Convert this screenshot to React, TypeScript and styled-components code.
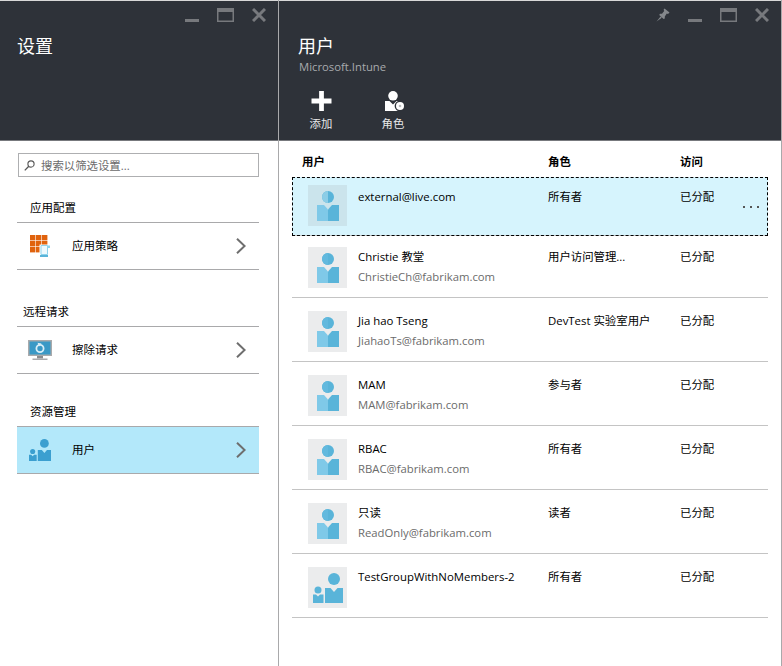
import React from "react"
import styled, { createGlobalStyle } from "styled-components"

const GlobalStyle = createGlobalStyle`
  html, body {
    margin: 0;
    padding: 0;
    background: #fff;
  }
  body {
    font-family: "Open Sans", "Noto Sans CJK SC", sans-serif;
    color: #000;
  }
`

type User = {
  name: string
  email?: string
  role: string
  group?: boolean
  selected?: boolean
}

const users: User[] = [
  { name: "external@live.com", role: "所有者", selected: true },
  { name: "Christie 教堂", email: "ChristieCh@fabrikam.com", role: "用户访问管理..." },
  { name: "Jia hao Tseng", email: "JiahaoTs@fabrikam.com", role: "DevTest 实验室用户" },
  { name: "MAM", email: "MAM@fabrikam.com", role: "参与者" },
  { name: "RBAC", email: "RBAC@fabrikam.com", role: "所有者" },
  { name: "只读", email: "ReadOnly@fabrikam.com", role: "读者" },
  { name: "TestGroupWithNoMembers-2", role: "所有者", group: true },
]

const WindowIcons = ({ pin }: { pin?: boolean }) => (
  <WindowControls>
    {pin && (
      <svg width="14" height="14" viewBox="0 0 14 14">
        <path d="M8.5 0.5 L13.5 4.5 L12 6 L10.8 5.6 L8.8 8.4 L8.8 10.4 L7.6 11 L3.2 7 L4 5.8 L6 5.8 L8.2 3 L7.6 1.8 Z" fill="#85888c" />
        <path d="M4.6 8.6 L0.5 13.5 L5.8 9.8 Z" fill="#85888c" />
      </svg>
    )}
    <svg width="14" height="14" viewBox="0 0 14 14">
      <rect x="0" y="11" width="14" height="3" fill="#77797d" />
    </svg>
    <svg width="17" height="14" viewBox="0 0 17 14">
      <path d="M0 0H17V14H0Z M1.5 4V12.5H15.5V4Z" fillRule="evenodd" fill="#77797d" />
    </svg>
    <svg width="14" height="14" viewBox="0 0 14 14">
      <path d="M1 1 L13 13 M13 1 L1 13" stroke="#77797d" strokeWidth="3" />
    </svg>
  </WindowControls>
)

const PersonIcon = ({ muted }: { muted?: boolean }) => (
  <svg width="22" height="30" viewBox="0 0 22 30">
    <circle cx="11" cy="6" r="6" fill="#59b4d9" />
    <path d="M11 0 A6 6 0 0 0 11 12 Z" fill={muted ? "#8ccde6" : "#62b9de"} />
    <path d="M0 14 L7 14 L11 18.5 L11 30 L0 30 Z" fill="#7fc9e8" />
    <path d="M22 14 L15 14 L11 18.5 L11 30 L22 30 Z" fill="#59b4d9" />
  </svg>
)

const GroupIcon = ({ size = 30, color = "#59b4d9" }: { size?: number; color?: string }) => (
  <svg width={size} height={size} viewBox="0 0 30 30">
    <circle cx="21" cy="6" r="6" fill={color} />
    <path d="M12 15 L17.5 15 L21 19 L24.5 15 L30 15 L30 30 L12 30 Z" fill={color} />
    <circle cx="5" cy="17" r="3.5" fill={color} />
    <path d="M0 21.5 L3 21.5 L5 23.5 L7 21.5 L10.5 21.5 L10.5 30 L0 30 Z" fill={color} />
  </svg>
)

const PolicyIcon = () => (
  <svg width="20" height="22" viewBox="0 0 20 22">
    {[0, 1, 2].map((row) =>
      [0, 1, 2].map((col) => (
        <rect key={`${row}-${col}`} x={col * 6} y={row * 6} width="5.4" height="5.4" fill="#e0620d" />
      ))
    )}
    <path d="M9.5 9.5 H20 V22 H9.5 Z" fill="#fff" />
    <path d="M11 10.5 H17.5 V19.5 H11 Z" fill="#eef9fd" stroke="#8fd3ec" strokeWidth="1" />
    <path d="M17.5 10.5 H20 V13 H17.5 Z" fill="#8fd3ec" />
    <path d="M10 20 H18 V22 H10 Z" fill="#59b4d9" />
  </svg>
)

const WipeIcon = () => (
  <svg width="24" height="20" viewBox="0 0 24 20">
    <rect x="0" y="0" width="24" height="16" fill="#a9aaac" />
    <rect x="1.5" y="1.5" width="21" height="13" fill="#3999c6" />
    <rect x="9" y="16" width="6" height="2.5" fill="#8a8c8e" />
    <rect x="4.5" y="18.5" width="15" height="1.5" fill="#a9aaac" />
    <circle cx="12" cy="8.5" r="3.6" fill="none" stroke="#d8eef7" strokeWidth="1.8" />
    <path d="M9.5 2.8 L13.5 3.6 L11 6.6 Z" fill="#d8eef7" />
  </svg>
)

const RoleIcon = () => (
  <svg width="24" height="20" viewBox="-4 0 24 20">
    <circle cx="8" cy="4.8" r="4.8" fill="#fff" />
    <path d="M0 10 L4.5 10 L8 13.5 L11.5 10 L14 10 L14 20 L0 20 Z" fill="#fff" />
    <circle cx="15" cy="15" r="5.4" fill="#2e3239" />
    <circle cx="15" cy="15" r="4" fill="#fff" />
    <circle cx="15" cy="15" r="1.3" fill="#b9babc" />
  </svg>
)

const Chevron = () => (
  <ChevronWrap>
    <svg width="10" height="16" viewBox="0 0 10 16">
      <path d="M1 0.8 L8.6 8 L1 15.2" fill="none" stroke="#6e6e6e" strokeWidth="2" />
    </svg>
  </ChevronWrap>
)

const App: React.FC = () => {
  return (
    <Page>
      <GlobalStyle />
      <SettingsBlade>
        <BladeHeader>
          <WindowIcons />
          <BladeTitle $left={17}>设置</BladeTitle>
        </BladeHeader>
        <SearchBox>
          <svg width="11" height="11" viewBox="0 0 11 11">
            <circle cx="7" cy="4" r="3.1" fill="none" stroke="#555" strokeWidth="1.1" />
            <path d="M4.8 6.2 L0.8 10.4" stroke="#555" strokeWidth="1.3" />
          </svg>
          <span>搜索以筛选设置...</span>
        </SearchBox>
        <SectionLabel $top={23} $left={30}>应用配置</SectionLabel>
        <MenuRow>
          <MenuIcon><PolicyIcon /></MenuIcon>
          <MenuText>应用策略</MenuText>
          <Chevron />
        </MenuRow>
        <SectionLabel $top={34} $left={23}>远程请求</SectionLabel>
        <MenuRow>
          <MenuIcon><WipeIcon /></MenuIcon>
          <MenuText>擦除请求</MenuText>
          <Chevron />
        </MenuRow>
        <SectionLabel $top={30} $left={30}>资源管理</SectionLabel>
        <MenuRow $active>
          <MenuIcon><GroupIcon size={22} color="#3b9fd0" /></MenuIcon>
          <MenuText>用户</MenuText>
          <Chevron />
        </MenuRow>
      </SettingsBlade>

      <UsersBlade>
        <BladeHeader>
          <WindowIcons pin />
          <BladeTitle $left={19}>用户</BladeTitle>
          <Subtitle>Microsoft.Intune</Subtitle>
          <Commands>
            <Command>
              <svg width="21" height="20" viewBox="0 0 21 21">
                <path d="M8 0H13V8H21V13H13V21H8V13H0V8H8Z" fill="#fff" />
              </svg>
              <span>添加</span>
            </Command>
            <Command>
              <RoleIcon />
              <span>角色</span>
            </Command>
          </Commands>
        </BladeHeader>
        <TableHead>
          <span>用户</span>
          <span>角色</span>
          <span>访问</span>
        </TableHead>
        <Rows>
          {users.map((user) => (
            <UserRow key={user.name} $selected={user.selected}>
              <Avatar $selected={user.selected}>
                {user.group ? <GroupIcon /> : <PersonIcon muted={user.selected} />}
              </Avatar>
              <NameCell>
                <Name>{user.name}</Name>
                {user.email && <Email>{user.email}</Email>}
              </NameCell>
              <Cell>{user.role}</Cell>
              <Cell>已分配</Cell>
              {user.selected && (
                <MoreDots>
                  <i />
                  <i />
                  <i />
                </MoreDots>
              )}
            </UserRow>
          ))}
        </Rows>
      </UsersBlade>
    </Page>
  )
}

const Page = styled.div`
  display: flex;
  width: 782px;
  height: 666px;
  overflow: hidden;
`

const SettingsBlade = styled.section`
  width: 278px;
  flex-shrink: 0;
  border-right: 1px solid #a9a9ab;
  box-sizing: content-box;
`

const UsersBlade = styled.section`
  flex: 1;
  min-width: 0;
  border-right: 1px solid #a9a9ab;
`

const BladeHeader = styled.header`
  position: relative;
  height: 141px;
  box-sizing: border-box;
  background: #2e3239;
  border-top: 1px solid #d8d8d8;
  border-bottom: 1px solid #77797d;
`

const WindowControls = styled.div`
  position: absolute;
  top: 7px;
  right: 12px;
  display: flex;
  align-items: center;
  gap: 18px;
`

const BladeTitle = styled.h1<{ $left: number }>`
  margin: 32px 0 0 ${({ $left }) => $left}px;
  font-size: 18px;
  line-height: 26px;
  font-weight: 400;
  color: #fff;
`

const Subtitle = styled.div`
  margin: 0 0 0 20px;
  font-size: 11.3px;
  line-height: 15px;
  color: #a8aaad;
`

const Commands = styled.div`
  display: flex;
  margin: 17px 0 0 19px;
  gap: 26px;
`

const Command = styled.div`
  width: 46px;
  display: flex;
  flex-direction: column;
  align-items: center;
  gap: 6px;
  font-size: 11.4px;
  line-height: 14px;
  color: #e8e8e9;
`

const SearchBox = styled.div`
  display: flex;
  align-items: center;
  gap: 6px;
  box-sizing: border-box;
  width: 241px;
  height: 24px;
  margin: 12px 0 0 18px;
  padding: 0 5px;
  border: 1px solid #aeafb1;
  font-size: 11.4px;
  color: #6b6b6b;
`

const SectionLabel = styled.div<{ $top: number; $left: number }>`
  margin: ${({ $top }) => $top}px 0 0 ${({ $left }) => $left}px;
  height: 22px;
  font-size: 11.5px;
  line-height: 16px;
`

const MenuRow = styled.div<{ $active?: boolean }>`
  display: flex;
  align-items: center;
  box-sizing: border-box;
  width: 242px;
  height: 48px;
  margin-left: 17px;
  border-top: 1px solid #a9a9ab;
  border-bottom: 1px solid #a9a9ab;
  background: ${({ $active }) => ($active ? "#b3e8fa" : "transparent")};
`

const MenuIcon = styled.div`
  width: 55px;
  display: flex;
  justify-content: center;
  padding-right: 9px;
  box-sizing: border-box;
`

const MenuText = styled.div`
  flex: 1;
  font-size: 11.5px;
  padding-bottom: 3px;
`

const ChevronWrap = styled.div`
  display: flex;
  margin-right: 13px;
`

const TableHead = styled.div`
  display: grid;
  grid-template-columns: 246px 132px 1fr;
  height: 36px;
  padding: 13px 0 0 23px;
  box-sizing: border-box;
  font-size: 11.4px;
  line-height: 16px;
  font-weight: 700;
`

const Rows = styled.div`
  width: 476px;
  margin-left: 13px;
`

const UserRow = styled.div<{ $selected?: boolean }>`
  --text-top: ${({ $selected }) => ($selected ? "4px" : "2px")};
  position: relative;
  display: grid;
  grid-template-columns: 39px 201px 132px 1fr;
  grid-template-rows: 41px;
  height: ${({ $selected }) => ($selected ? "59px" : "64px")};
  margin-bottom: ${({ $selected }) => ($selected ? "-2px" : "0")};
  padding: ${({ $selected }) => ($selected ? "8px 0 0 16px" : "13px 0 0 16px")};
  box-sizing: border-box;
  border-bottom: 1px solid #c4c4c4;
  background: ${({ $selected }) => ($selected ? "#d6f4fd" : "transparent")};
  outline: ${({ $selected }) => ($selected ? "1px dashed #000" : "none")};
  outline-offset: -1px;
`

const Avatar = styled.div<{ $selected?: boolean }>`
  width: 39px;
  height: 41px;
  display: flex;
  align-items: center;
  justify-content: center;
  background: ${({ $selected }) => ($selected ? "#cbe4ec" : "#ebeced")};
`

const NameCell = styled.div`
  padding-left: 11px;
`

const Name = styled.div`
  font-size: 11.4px;
  line-height: 16px;
  padding-top: var(--text-top);
`

const Email = styled.div`
  font-size: 11.3px;
  line-height: 16px;
  margin-top: 4px;
  color: #6b6b6b;
`

const Cell = styled.div`
  font-size: 11.4px;
  line-height: 16px;
  padding-top: var(--text-top);
`

const MoreDots = styled.div`
  position: absolute;
  right: 9px;
  top: 29px;
  display: flex;
  gap: 5px;

  i {
    display: block;
    width: 2px;
    height: 2px;
    background: #555;
  }
`

export default App
